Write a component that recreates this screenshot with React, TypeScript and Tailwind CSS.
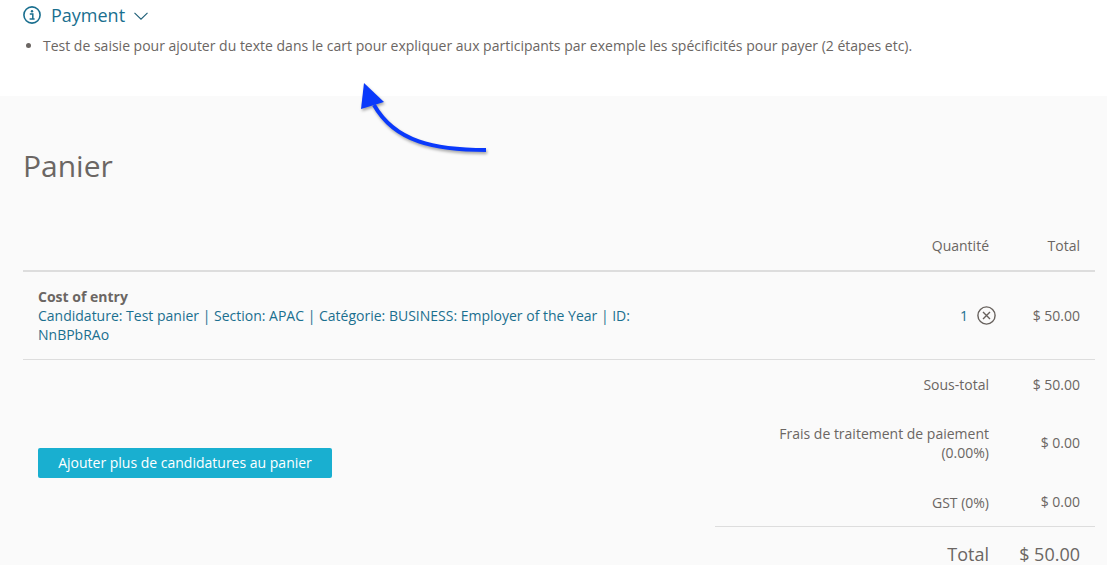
import React from "react";

const font = "font-['Open_Sans',sans-serif]";

const InfoIcon = () => (
  <svg width="18" height="18" viewBox="0 0 18 18" fill="none" className="shrink-0">
    <circle cx="9" cy="9" r="8.1" stroke="#1a6f8f" strokeWidth="1.6" />
    <circle cx="9" cy="5.2" r="1.2" fill="#1a6f8f" />
    <path d="M6.8 8h3v4.8M6.6 13h5" stroke="#1a6f8f" strokeWidth="1.5" />
  </svg>
);

const Chevron = () => (
  <svg width="14" height="8" viewBox="0 0 14 8" fill="none" className="-ml-[1px] mt-[1px]">
    <path d="M.5 .8l6.5 6.4 6.5-6.4" stroke="#1f5f78" strokeWidth="1.1" />
  </svg>
);

const RemoveIcon = () => (
  <svg width="19" height="19" viewBox="0 0 19 19" fill="none">
    <circle cx="9.5" cy="9.5" r="8.6" stroke="#66605c" strokeWidth="1.4" />
    <path d="M6 6l7 7M13 6l-7 7" stroke="#66605c" strokeWidth="1.4" />
  </svg>
);

const Arrow = () => (
  <svg width="140" height="80" viewBox="0 0 140 80" fill="none" className="absolute left-[350px] top-[78px]">
    <g style={{ filter: "drop-shadow(1px 2px 1.5px rgba(0,0,0,0.35))" }}>
      <path d="M136 72C85 72 45 64 24 27" stroke="#0a39fb" strokeWidth="4" />
      <path d="M14 5L34 24L11 31Z" fill="#0a39fb" />
    </g>
  </svg>
);

const summary = [
  { label: ["Sous-total"], value: "$ 50.00", h: "h-[49px]" },
  { label: ["Frais de traitement de paiement", "(0.00%)"], value: "$ 0.00", h: "h-[67px]" },
  { label: ["GST (0%)"], value: "$ 0.00", h: "h-[50px] pt-[2px]" },
];

export default function App() {
  return (
    <div className={`${font} relative h-[565px] overflow-hidden bg-[#fafafa] text-sm text-[#6b6663]`}>
      <div className="h-[96px] bg-white px-[23px] pt-[4px]">
        <div className="flex h-[22px] items-center gap-[10px] text-lg text-[#1a6f8f]">
          <InfoIcon />
          <span>Payment</span>
          <Chevron />
        </div>
        <ul className="mt-[10px] list-disc pl-[20px] leading-[20px]">
          <li>Test de saisie pour ajouter du texte dans le cart pour expliquer aux participants par exemple les spécificités pour payer (2 étapes etc).</li>
        </ul>
      </div>

      <div className="pl-[23px] pr-[12px]">
        <h1 className="mt-[49px] text-[30px] leading-[42px] font-normal">Panier</h1>

        <div className="mt-[46px] flex h-[39px] items-start justify-end border-b-2 border-[#ddd] pt-[3px] leading-[20px]">
          <span className="w-[200px] pr-[15px] text-right">Quantité</span>
          <span className="w-[91px] pr-[15px] text-right">Total</span>
        </div>

        <div className="flex h-[88px] items-center border-b border-[#ddd] pl-[15px]">
          <div className="w-[640px] leading-[19px]">
            <div className="font-bold">Cost of entry</div>
            <div className="text-[#1a6f8f]">
              Candidature: Test panier | Section: APAC | Catégorie: BUSINESS: Employer of the Year | ID: NnBPbRAo
            </div>
          </div>
          <div className="ml-auto flex items-center">
            <span className="text-[#1a6f8f]">1</span>
            <span className="ml-[9px]"><RemoveIcon /></span>
            <span className="w-[99px] pr-[15px] text-right">$ 50.00</span>
          </div>
        </div>

        <div className="flex">
          <div className="flex h-[166px] flex-1 items-center pl-[15px] pt-[40px]">
            <button className="h-[30px] w-[294px] rounded-[2px] bg-[#19afd0] text-sm text-white">
              Ajouter plus de candidatures au panier
            </button>
          </div>
          <div className="w-[380px]">
            {summary.map((row) => (
              <div key={row.value + row.label[0]} className={`flex items-center ${row.h}`}>
                <div className="flex-1 pr-[15px] text-right leading-[19px]">
                  {row.label.map((line) => (
                    <div key={line}>{line}</div>
                  ))}
                </div>
                <span className="w-[91px] pr-[15px] text-right">{row.value}</span>
              </div>
            ))}
            <div className="flex h-[55px] items-center border-t border-[#ddd] text-lg">
              <div className="flex-1 pr-[15px] text-right">Total</div>
              <span className="w-[91px] pr-[15px] text-right">$ 50.00</span>
            </div>
          </div>
        </div>
      </div>

      <Arrow />
    </div>
  );
}
